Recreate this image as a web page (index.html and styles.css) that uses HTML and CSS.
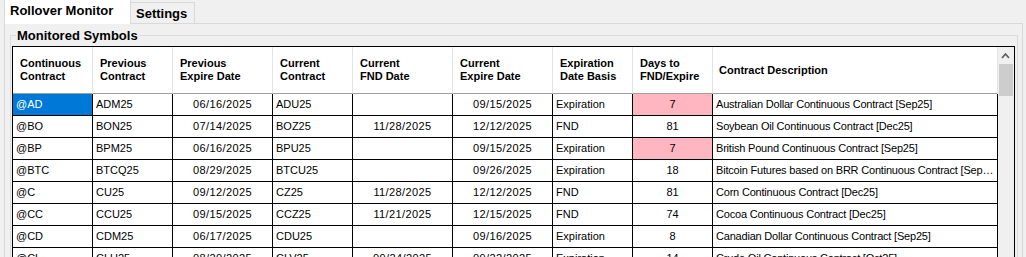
FILE: index.html
```html
<!DOCTYPE html>
<html>
<head>
<meta charset="utf-8">
<title>Rollover Monitor</title>
<link rel="stylesheet" href="styles.css">
</head>
<body>
<div class="tabstrip">
  <div class="tab tab-active">Rollover Monitor</div>
  <div class="tab tab-inactive">Settings</div>
</div>
<div class="page">
  <fieldset class="group">
    <legend class="group-title">Monitored Symbols</legend>
    <div class="grid">
      <div class="table-wrap">
        <table class="data">
          <thead>
            <tr>
              <th class="w80">Continuous<br>Contract</th>
              <th class="w80">Previous<br>Contract</th>
              <th class="w100">Previous<br>Expire Date</th>
              <th class="w80">Current<br>Contract</th>
              <th class="w100">Current<br>FND Date</th>
              <th class="w100">Current<br>Expire Date</th>
              <th class="w80">Expiration<br>Date Basis</th>
              <th class="w80">Days to<br>FND/Expire</th>
              <th class="w285">Contract Description</th>
            </tr>
          </thead>
          <tbody>
            <tr>
              <td class="selected">@AD</td><td>ADM25</td><td class="ctr date">06/16/2025</td><td>ADU25</td><td class="ctr date"></td><td class="ctr date">09/15/2025</td><td>Expiration</td><td class="ctr alert">7</td><td class="desc">Australian Dollar Continuous Contract [Sep25]</td>
            </tr>
            <tr>
              <td>@BO</td><td>BON25</td><td class="ctr date">07/14/2025</td><td>BOZ25</td><td class="ctr date">11/28/2025</td><td class="ctr date">12/12/2025</td><td>FND</td><td class="ctr">81</td><td class="desc">Soybean Oil Continuous Contract [Dec25]</td>
            </tr>
            <tr>
              <td>@BP</td><td>BPM25</td><td class="ctr date">06/16/2025</td><td>BPU25</td><td class="ctr date"></td><td class="ctr date">09/15/2025</td><td>Expiration</td><td class="ctr alert">7</td><td class="desc">British Pound Continuous Contract [Sep25]</td>
            </tr>
            <tr>
              <td>@BTC</td><td>BTCQ25</td><td class="ctr date">08/29/2025</td><td>BTCU25</td><td class="ctr date"></td><td class="ctr date">09/26/2025</td><td>Expiration</td><td class="ctr">18</td><td class="desc">Bitcoin Futures based on BRR Continuous Contract [Sep25]</td>
            </tr>
            <tr>
              <td>@C</td><td>CU25</td><td class="ctr date">09/12/2025</td><td>CZ25</td><td class="ctr date">11/28/2025</td><td class="ctr date">12/12/2025</td><td>FND</td><td class="ctr">81</td><td class="desc">Corn Continuous Contract [Dec25]</td>
            </tr>
            <tr>
              <td>@CC</td><td>CCU25</td><td class="ctr date">09/15/2025</td><td>CCZ25</td><td class="ctr date">11/21/2025</td><td class="ctr date">12/15/2025</td><td>FND</td><td class="ctr">74</td><td class="desc">Cocoa Continuous Contract [Dec25]</td>
            </tr>
            <tr>
              <td>@CD</td><td>CDM25</td><td class="ctr date">06/17/2025</td><td>CDU25</td><td class="ctr date"></td><td class="ctr date">09/16/2025</td><td>Expiration</td><td class="ctr">8</td><td class="desc">Canadian Dollar Continuous Contract [Sep25]</td>
            </tr>
            <tr>
              <td>@CL</td><td>CLU25</td><td class="ctr date">08/20/2025</td><td>CLV25</td><td class="ctr date">09/24/2025</td><td class="ctr date">09/22/2025</td><td>Expiration</td><td class="ctr">14</td><td class="desc">Crude Oil Continuous Contract [Oct25]</td>
            </tr>
          </tbody>
        </table>
      </div>
      <div class="vscroll">
        <div class="vscroll-btn">
          <svg width="16" height="17" viewBox="0 0 16 17"><path d="M4 11 L7.5 7 L11 11" fill="none" stroke="#606060" stroke-width="1.8"/></svg>
        </div>
        <div class="vscroll-thumb"></div>
      </div>
    </div>
  </fieldset>
</div>
</body>
</html>
```
FILE: styles.css
```css
html, body {
  margin: 0;
  height: 257px;
  overflow: hidden;
  background: #f0f0f0;
  font-family: "Liberation Sans", Arial, sans-serif;
  color: #000;
}

.tabstrip {
  display: flex;
  align-items: flex-end;
  height: 23px;
  padding-left: 4px;
}

.tab {
  box-sizing: border-box;
  font-size: 13px;
  font-weight: bold;
  line-height: 15px;
  white-space: nowrap;
  border: 1px solid #d9d9d9;
  border-bottom: none;
}

.tab-active {
  position: relative;
  z-index: 1;
  width: 127px;
  height: 24px;
  margin-bottom: -1px;
  padding: 3px 0 0 5px;
  border-top: none;
  background: #fff;
}

.tab-inactive {
  width: 64px;
  height: 21px;
  padding: 3px 0 0 5px;
  border-left: none;
  background: #f0f0f0;
}

.page {
  margin: 0 3px 0 4px;
  padding: 4px 4px 0 5px;
  border: 1px solid #d9d9d9;
  height: 260px;
}

.group {
  margin: 0;
  padding: 0 2px 0 1px;
  min-width: 0;
  border: 1px solid #dcdcdc;
}

.group-title {
  margin-left: 4px;
  padding: 0 1px;
  font-size: 13px;
  font-weight: bold;
  line-height: 15px;
}

.grid {
  display: flex;
  margin-top: 3px;
  height: 260px;
  border: 1px solid #000;
  background: #fff;
}

.table-wrap {
  width: 985px;
  overflow: hidden;
}

.data {
  width: 985px;
  table-layout: fixed;
  border-collapse: separate;
  border-spacing: 0;
  font-size: 11px;
}

.data thead tr {
  height: 47px;
}

.data tbody tr {
  height: 22px;
}

.data th {
  box-sizing: border-box;
  padding: 0 0 0 7px;
  text-align: left;
  vertical-align: middle;
  font-weight: bold;
  line-height: 13px;
  background: #fff;
  border-right: 1px solid #e3e3e3;
  border-bottom: 1px solid #a0a0a0;
}

.data th:last-child {
  padding-left: 6px;
}

.w80 { width: 80px; }
.w100 { width: 100px; }
.w285 { width: 285px; }

.data td {
  box-sizing: border-box;
  padding: 0 3px;
  line-height: 13px;
  vertical-align: middle;
  white-space: nowrap;
  overflow: hidden;
  text-overflow: ellipsis;
  background: #fff;
  border-right: 1px solid #000;
  border-bottom: 1px solid #000;
}

.data td.ctr {
  text-align: center;
}

.data td.date {
  letter-spacing: 0.4px;
}

.data td.desc {
  letter-spacing: -0.2px;
}

.data td.alert {
  background: #ffb6c1;
}

.data td.selected {
  background: #0078d7;
  color: #fff;
}

.vscroll {
  width: 16px;
  background: #f0f0f0;
  display: flex;
  flex-direction: column;
}

.vscroll-btn {
  height: 17px;
}

.vscroll-btn svg {
  display: block;
}

.vscroll-thumb {
  height: 32px;
  margin: 0 1px;
  background: #cdcdcd;
}
```
